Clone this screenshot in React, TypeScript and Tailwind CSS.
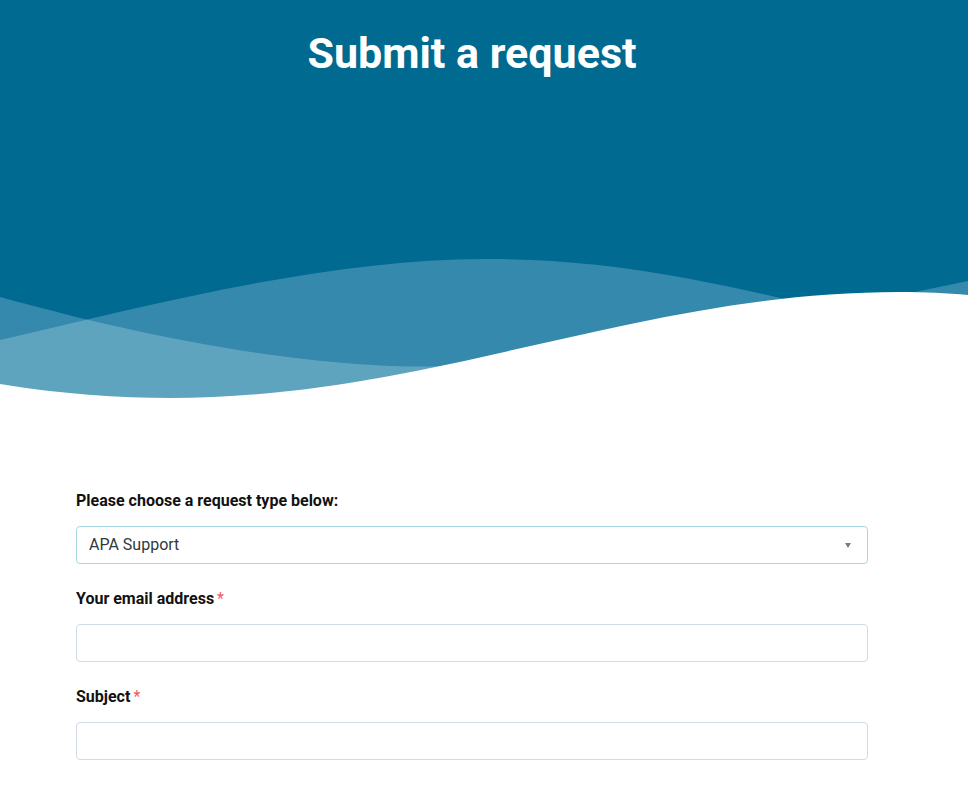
import React from 'react';

const WAVE_TOP = 'M0,340 C150,305 330,258 490,259 C620,260 720,280 968,345 L968,400 L0,400 Z';
const WAVE_BACK = 'M0,297 C120,330 300,372 460,366 C640,360 800,315 968,281 L968,400 L0,400 Z';
const WAVE_WHITE = 'M0,384 C60,394 120,398 170,398 C433,398 637,292 900,292 C925,292 946,293 968,295 L968,400 L0,400 Z';

const Waves = () => (
  <svg className="block w-full h-[160px]" viewBox="0 240 968 160" preserveAspectRatio="none">
    <defs>
      <clipPath id="waveTopClip">
        <path d={WAVE_TOP} />
      </clipPath>
    </defs>
    <path d={WAVE_TOP} fill="#3589ad" />
    <path d={WAVE_BACK} fill="#3589ad" />
    <path d={WAVE_BACK} fill="#5fa4bf" clipPath="url(#waveTopClip)" />
    <path d={WAVE_WHITE} fill="#ffffff" />
  </svg>
);

const Label = ({ children, required }: { children: React.ReactNode; required?: boolean }) => (
  <label className="block h-5 mb-[15px] text-[16px] leading-5 font-bold text-[#111]">
    {children}
    {required && <span className="ml-[3px] font-normal text-[#ef5a5f]">*</span>}
  </label>
);

const App = () => {
  return (
    <div className="min-h-screen bg-white font-['Roboto',sans-serif]">
      <header className="bg-[#016a91]">
        <div className="h-[240px] ml-[76px] w-[792px] pt-[28px]">
          <h1 className="text-center text-white text-[43px] leading-[50px] font-bold">Submit a request</h1>
        </div>
        <Waves />
      </header>

      <main className="ml-[76px] w-[792px] pt-[91px] pb-10">
        <div className="mb-[25px]">
          <Label>Please choose a request type below:</Label>
          <div className="h-[38px] flex items-center justify-between rounded border border-[#a6d5e5] pl-3 pr-4 text-[16px] text-[#2f3941]">
            <span>APA Support</span>
            <span className="w-0 h-0 border-l-[3px] border-r-[3px] border-t-[5px] border-l-transparent border-r-transparent border-t-[#7c7c7c]" />
          </div>
        </div>

        <div className="mb-[25px]">
          <Label required>Your email address</Label>
          <input className="block w-full h-[38px] rounded border border-[#d3dae8] px-3 text-[16px] outline-none" />
        </div>

        <div className="mb-[25px]">
          <Label required>Subject</Label>
          <input className="block w-full h-[38px] rounded border border-[#d3dae8] px-3 text-[16px] outline-none" />
        </div>
      </main>
    </div>
  );
};

export default App;
